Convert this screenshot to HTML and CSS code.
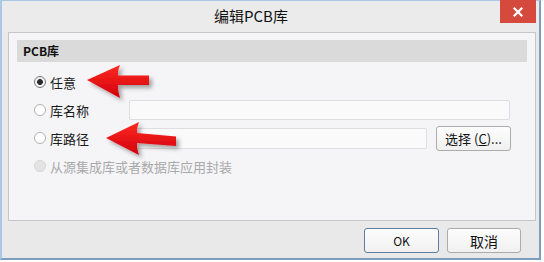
FILE: index.html
```html
<!DOCTYPE html>
<html lang="zh-CN">
<head>
<meta charset="utf-8">
<title>编辑PCB库</title>
<link rel="stylesheet" href="styles.css">
</head>
<body>
<div class="page">
  <div class="window">
    <div class="titlebar">
      <div class="title">编辑PCB库</div>
      <div class="close">
        <svg width="10" height="10" viewBox="0 0 10 10"><path d="M1.5 1.5 L8.5 8.5 M8.5 1.5 L1.5 8.5" stroke="#fff" stroke-width="2.2" stroke-linecap="square"/></svg>
      </div>
    </div>
    <div class="panel">
      <div class="section-head">PCB库</div>
      <div class="rows">
        <div class="row">
          <label class="opt"><span class="radio checked"></span><span>任意</span></label>
        </div>
        <div class="row">
          <label class="opt"><span class="radio"></span><span>库名称</span></label>
          <div class="input wide"></div>
        </div>
        <div class="row">
          <label class="opt"><span class="radio"></span><span>库路径</span></label>
          <div class="input narrow"></div>
          <div class="btn choose">选择 (<u>C</u>)...</div>
        </div>
        <div class="row">
          <label class="opt disabled"><span class="radio"></span><span>从源集成库或者数据库应用封装</span></label>
        </div>
      </div>
    </div>
    <div class="footer">
      <div class="btn ok">OK</div>
      <div class="btn cancel">取消</div>
    </div>
  </div>
  <svg class="arrows" width="544" height="262" viewBox="0 0 544 262">
    <defs>
      <linearGradient id="red" x1="0" y1="0" x2="0" y2="1">
        <stop offset="0" stop-color="#ff2a22"/>
        <stop offset="1" stop-color="#d0000c"/>
      </linearGradient>
      <filter id="sh" x="-20%" y="-30%" width="150%" height="180%">
        <feDropShadow dx="3" dy="3" stdDeviation="2" flood-color="#000" flood-opacity="0.35"/>
      </filter>
    </defs>
    <path filter="url(#sh)" fill="url(#red)" d="M87,80 L120,65 Q117.5,71 118,75.5 L149,75.5 L149,85 L118,85 Q117.5,91 120,98 Z"/>
    <path filter="url(#sh)" fill="url(#red)" d="M106,138 L139,122 Q136.5,128 137,133 L176,136.5 L176,146 L137,143 Q136.5,149 139,155 Z"/>
  </svg>
</div>
</body>
</html>
```
FILE: styles.css
```css
* { box-sizing: border-box; }
html, body { margin: 0; padding: 0; background: #ffffff; }
body {
  font-family: "Noto Sans CJK SC", "Noto Sans", sans-serif;
  font-size: 13px;
  color: #1a1a1a;
}
.page { position: relative; width: 544px; height: 262px; }
.window {
  width: 541px;
  height: 260px;
  background: #e9e9e9;
  border: 2px solid #aac8e6;
  border-top-width: 1px;
  border-right-color: #7d9dbd;
  border-bottom-color: #7d9dbd;
  display: flex;
  flex-direction: column;
}
.titlebar {
  height: 31px;
  display: flex;
  align-items: flex-start;
  background: #ebebeb;
}
.title {
  flex: 1;
  text-align: center;
  font-size: 15px;
  line-height: 30px;
  color: #111;
}
.close {
  width: 36px;
  height: 23px;
  margin-right: 3px;
  margin-top: -1px;
  background: #d64a3e;
  display: flex;
  align-items: center;
  justify-content: center;
}
.panel {
  height: 189px;
  margin: 0 3px 0 6px;
  background: #f5f5f7;
  border: 1px solid #c6c6c6;
  padding: 7px 8px 0 8px;
}
.section-head {
  height: 22px;
  line-height: 22px;
  background: #dadada;
  padding-left: 6px;
  font-size: 12px;
  font-weight: bold;
  color: #111;
}
.rows {
  margin-top: 6px;
  padding-left: 17px;
  display: flex;
  flex-direction: column;
}
.row {
  height: 28px;
  display: flex;
  align-items: center;
}
.opt {
  width: 95px;
  display: flex;
  align-items: center;
  gap: 4px;
  white-space: nowrap;
}
.opt.disabled { color: #a9a9a9; }
.radio {
  width: 12px;
  height: 12px;
  border-radius: 50%;
  border: 1px solid #b2b2b2;
  background: #ffffff;
  flex: none;
}
.radio.checked {
  border-color: #7a7a7a;
  background: radial-gradient(circle, #2b2b2b 0 2.6px, #f2f2f2 3.2px);
}
.opt.disabled .radio {
  border-color: #d6d6d6;
  background: #e4e4e4;
}
.input {
  height: 20px;
  background: #fafafb;
  border: 1px solid #dedee0;
  border-radius: 2px;
}
.input.wide { width: 381px; }
.input.narrow { width: 298px; height: 21px; }
.btn {
  height: 25px;
  display: flex;
  align-items: center;
  justify-content: center;
  border: 1px solid #acacac;
  border-radius: 3px;
  background: linear-gradient(#fdfdfd, #f0f0f0);
  font-size: 13px;
  color: #111;
}
.btn.choose { width: 75px; margin-left: 9px; }
.footer {
  flex: 1;
  display: flex;
  justify-content: flex-end;
  align-items: flex-start;
  gap: 8px;
  padding: 7px 18px 0 0;
}
.btn.ok { width: 75px; border-color: #5d7f9f; font-size: 12px; }
.btn.cancel { width: 74px; font-size: 14px; }
.arrows { position: absolute; left: 0; top: 0; pointer-events: none; }
```
